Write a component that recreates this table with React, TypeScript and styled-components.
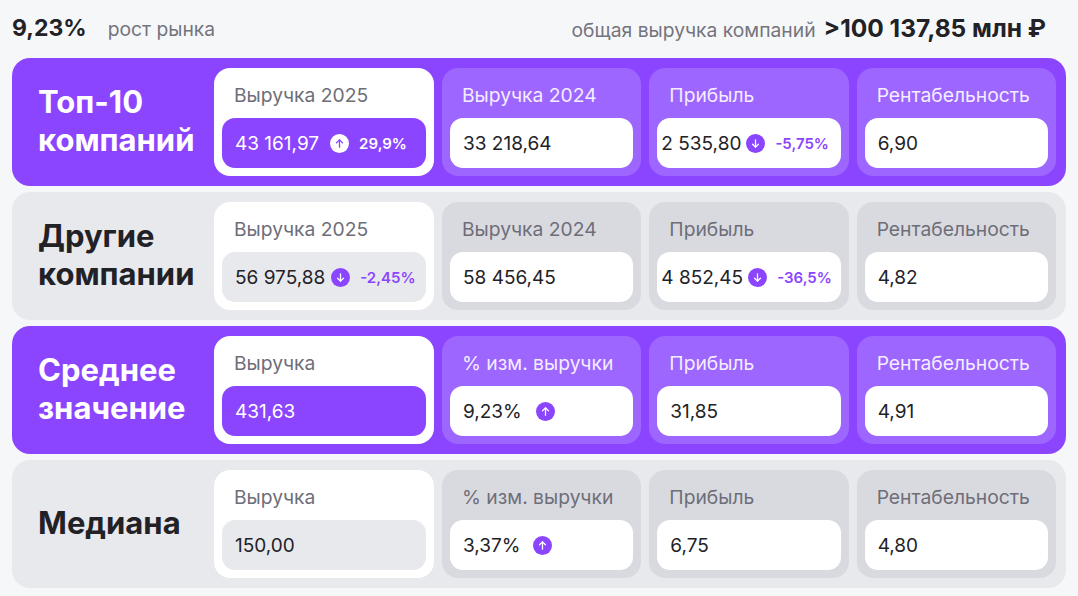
import React, { FC } from 'react';
import styled, { createGlobalStyle, css } from 'styled-components';

const PURPLE = '#8b45ff';
const PURPLE_CARD = '#9c66ff';
const GREY_ROW = '#e8e9ed';
const GREY_CARD = '#d9dae0';
const TEXT = '#222226';
const MUTED = '#6e6e78';

const GlobalStyle = createGlobalStyle`
  * { box-sizing: border-box; }
  body {
    margin: 0;
    background: #f6f7f9;
    font-family: Inter, "Noto Sans", sans-serif;
    color: ${TEXT};
  }
`;

const Page = styled.div`
  padding: 0 12px 8px;
`;

const Header = styled.div`
  height: 58px;
  display: flex;
  align-items: center;
  justify-content: space-between;
  padding-bottom: 3px;
`;

const HeaderGroup = styled.div<{ $gap: number }>`
  display: flex;
  align-items: baseline;
  gap: ${(p) => p.$gap}px;
`;

const Big = styled.span<{ $size: number }>`
  font-size: ${(p) => p.$size}px;
  font-weight: 700;
  color: ${TEXT};
`;

const Muted = styled.span`
  font-size: 19.3px;
  color: #74747d;
`;

const Rows = styled.div`
  display: flex;
  flex-direction: column;
  gap: 6px;
`;

type Tone = 'purple' | 'grey';

const Row = styled.div<{ $tone: Tone }>`
  height: 128px;
  border-radius: 18px;
  background: ${(p) => (p.$tone === 'purple' ? PURPLE : GREY_ROW)};
  padding: 10px 10px 10px 26px;
  display: grid;
  grid-template-columns: 168px 220px repeat(3, 1fr);
  gap: 8px;
`;

const Title = styled.div<{ $tone: Tone }>`
  align-self: center;
  font-size: 31px;
  font-weight: 700;
  line-height: 38px;
  color: ${(p) => (p.$tone === 'purple' ? '#fff' : TEXT)};
  padding-bottom: 2px;
  white-space: nowrap;
`;

const Card = styled.div<{ $tone: Tone; $main?: boolean }>`
  border-radius: 16px;
  padding: 8px;
  display: flex;
  flex-direction: column;
  background: ${(p) => (p.$main ? '#fff' : p.$tone === 'purple' ? PURPLE_CARD : GREY_CARD)};
`;

const Label = styled.div<{ $light?: boolean }>`
  height: 42px;
  display: flex;
  align-items: center;
  padding: 0 0 4px 12px;
  font-size: 19.3px;
  color: ${(p) => (p.$light ? '#f4edff' : MUTED)};
  white-space: nowrap;
`;

const ValueBox = styled.div<{ $bg: string; $light?: boolean; $tight?: boolean }>`
  height: 50px;
  border-radius: 13px;
  background: ${(p) => p.$bg};
  display: flex;
  align-items: center;
  padding: 0 ${(p) => (p.$tight ? '4px' : '13px')};
  font-size: 19px;
  color: ${(p) => (p.$light ? '#fff' : TEXT)};
  white-space: nowrap;
`;

const Badge = styled.span<{ $inverse?: boolean; $gap: number }>`
  width: 19px;
  height: 19px;
  border-radius: 50%;
  flex: none;
  margin-left: ${(p) => p.$gap}px;
  display: inline-flex;
  align-items: center;
  justify-content: center;
  background: ${(p) => (p.$inverse ? '#fff' : PURPLE)};
  color: ${(p) => (p.$inverse ? PURPLE : '#fff')};
`;

const Delta = styled.span<{ $light?: boolean }>`
  margin-left: 10px;
  font-size: 15px;
  font-weight: 600;
  ${(p) =>
    p.$light
      ? css`
          color: #fff;
        `
      : css`
          color: ${PURPLE};
        `}
`;

const Arrow: FC<{ down?: boolean }> = ({ down }) => (
  <svg width="11" height="11" viewBox="0 0 12 12" fill="none" stroke="currentColor" strokeWidth="1.4" strokeLinecap="round" strokeLinejoin="round">
    {down ? (
      <>
        <path d="M6 2v8" />
        <path d="M2.8 6.8 6 10l3.2-3.2" />
      </>
    ) : (
      <>
        <path d="M6 10V2" />
        <path d="M2.8 5.2 6 2l3.2 3.2" />
      </>
    )}
  </svg>
);

type Cell = {
  label: string;
  value: string;
  arrow?: 'up' | 'down';
  delta?: string;
  tight?: boolean;
  gap?: number;
};

type RowData = {
  tone: Tone;
  title: string[];
  cells: Cell[];
};

const rows: RowData[] = [
  {
    tone: 'purple',
    title: ['Топ-10', 'компаний'],
    cells: [
      { label: 'Выручка 2025', value: '43 161,97', arrow: 'up', delta: '29,9%', gap: 11 },
      { label: 'Выручка 2024', value: '33 218,64' },
      { label: 'Прибыль', value: '2 535,80', arrow: 'down', delta: '-5,75%', tight: true, gap: 5 },
      { label: 'Рентабельность', value: '6,90' },
    ],
  },
  {
    tone: 'grey',
    title: ['Другие', 'компании'],
    cells: [
      { label: 'Выручка 2025', value: '56 975,88', arrow: 'down', delta: '-2,45%', gap: 6 },
      { label: 'Выручка 2024', value: '58 456,45' },
      { label: 'Прибыль', value: '4 852,45', arrow: 'down', delta: '-36,5%', tight: true, gap: 5 },
      { label: 'Рентабельность', value: '4,82' },
    ],
  },
  {
    tone: 'purple',
    title: ['Среднее', 'значение'],
    cells: [
      { label: 'Выручка', value: '431,63' },
      { label: '% изм. выручки', value: '9,23%', arrow: 'up', gap: 14 },
      { label: 'Прибыль', value: '31,85' },
      { label: 'Рентабельность', value: '4,91' },
    ],
  },
  {
    tone: 'grey',
    title: ['Медиана'],
    cells: [
      { label: 'Выручка', value: '150,00' },
      { label: '% изм. выручки', value: '3,37%', arrow: 'up', gap: 13 },
      { label: 'Прибыль', value: '6,75' },
      { label: 'Рентабельность', value: '4,80' },
    ],
  },
];

const App: FC = () => (
  <>
    <GlobalStyle />
    <Page>
      <Header>
        <HeaderGroup $gap={21}>
          <Big $size={23}>9,23%</Big>
          <Muted>рост рынка</Muted>
        </HeaderGroup>
        <HeaderGroup $gap={8} style={{ marginRight: 20 }}>
          <Muted>общая выручка компаний</Muted>
          <Big $size={24.5}>&gt;100 137,85 млн ₽</Big>
        </HeaderGroup>
      </Header>
      <Rows>
        {rows.map((row, i) => (
          <Row key={i} $tone={row.tone}>
            <Title $tone={row.tone}>
              {row.title.map((line) => (
                <div key={line}>{line}</div>
              ))}
            </Title>
            {row.cells.map((cell, j) => {
              const main = j === 0;
              const inPurple = main && row.tone === 'purple';
              const bg = main ? (row.tone === 'purple' ? PURPLE : GREY_ROW) : '#fff';
              return (
                <Card key={j} $tone={row.tone} $main={main}>
                  <Label $light={!main && row.tone === 'purple'}>{cell.label}</Label>
                  <ValueBox $bg={bg} $light={inPurple} $tight={cell.tight}>
                    {cell.value}
                    {cell.arrow && (
                      <Badge $inverse={inPurple} $gap={cell.gap ?? 10}>
                        <Arrow down={cell.arrow === 'down'} />
                      </Badge>
                    )}
                    {cell.delta && <Delta $light={inPurple}>{cell.delta}</Delta>}
                  </ValueBox>
                </Card>
              );
            })}
          </Row>
        ))}
      </Rows>
    </Page>
  </>
);

export default App;
